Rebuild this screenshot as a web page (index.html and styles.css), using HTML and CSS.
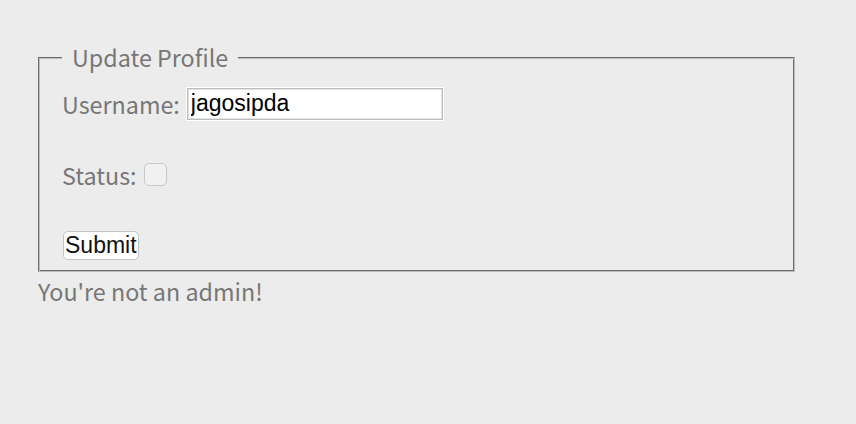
FILE: index.html
```html
<!DOCTYPE html>
<html>
<head>
<meta charset="utf-8">
<link rel="stylesheet" href="styles.css">
</head>
<body>
<form class="profile">
  <fieldset class="box">
    <legend class="box-title">Update Profile</legend>
    <div class="row">
      <label class="lbl" for="u">Username:</label>
      <input class="text-in" id="u" type="text" value="jagosipda">
    </div>
    <div class="row">
      <label class="lbl" for="s">Status:</label>
      <span class="check"></span>
    </div>
    <div class="row row-last">
      <button class="btn" type="button">Submit</button>
    </div>
  </fieldset>
</form>
<div class="msg">You're not an admin!</div>
</body>
</html>
```

FILE: styles.css
```css
html, body {
  margin: 0;
  padding: 0;
  background: #ececec;
}
body {
  padding: 46px 0 0 38px;
  font-family: "Noto Sans CJK KR", "Noto Sans", sans-serif;
  font-size: 23.3px;
  color: #777777;
}
.profile {
  margin: 0;
}
.box {
  box-sizing: border-box;
  width: 757px;
  margin: 0;
  padding: 0 22px 11px 23px;
  border: 1px solid;
  border-color: #6e6e6e #bcbcbc #bcbcbc #6e6e6e;
  box-shadow: inset 1px 1px 0 #bcbcbc, inset -1px -1px 0 #6e6e6e;
}
.box-title {
  padding: 0 10px;
  margin: 0;
  height: 22px;
  line-height: 22px;
  background: #ececec;
}
.row {
  display: flex;
  align-items: center;
  height: 71px;
}
.row-last {
  height: auto;
  align-items: flex-start;
  padding-top: 21px;
}
.lbl {
  margin-right: 7px;
}
.text-in {
  box-sizing: border-box;
  width: 256px;
  height: 32px;
  margin: 0;
  padding: 0 2px 0 3px;
  border: 1px solid #bcbcbc;
  box-shadow: inset 0 0 0 1px #e2e2e2;
  outline: 1px solid #fff;
  background: #fff;
  font-family: "Liberation Sans", Arial, sans-serif;
  font-size: 23px;
  color: #000;
}
.check {
  box-sizing: border-box;
  width: 23px;
  height: 23px;
  border: 1px solid #c8c8c8;
  border-radius: 5px;
  background: #f1f1f1;
}
.btn {
  box-sizing: border-box;
  height: 29px;
  padding: 0 1px;
  margin-left: 1px;
  border: 1px solid #c4c4c4;
  border-radius: 5px;
  background: #fff;
  font-family: "Liberation Sans", Arial, sans-serif;
  font-size: 23px;
  line-height: 27px;
  color: #111;
}
.msg {
  margin-top: 5px;
  line-height: 28px;
}
```
